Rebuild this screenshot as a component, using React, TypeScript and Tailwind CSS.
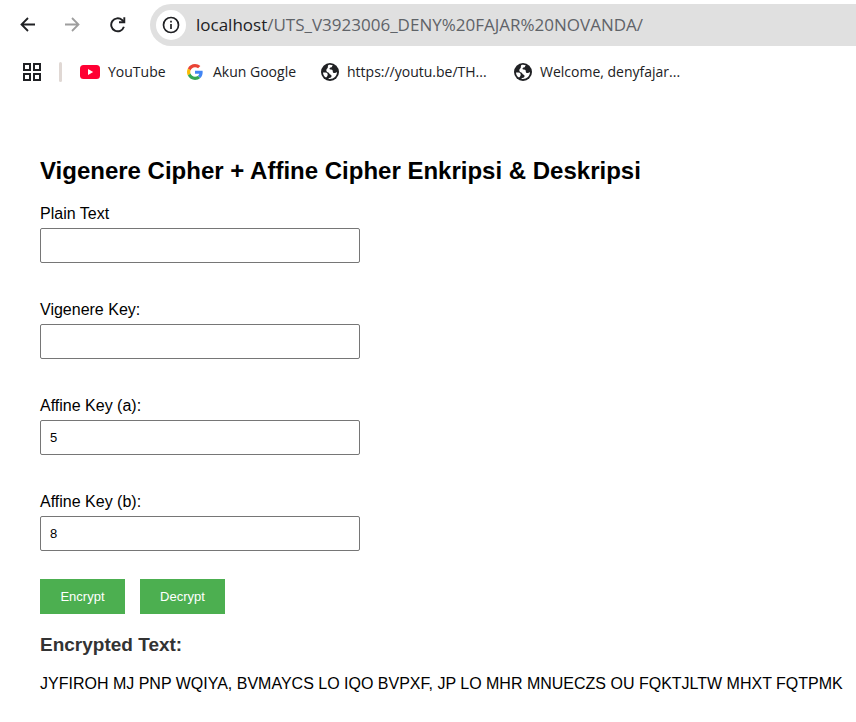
import { useState, type ReactNode } from "react";

function BackIcon() {
  return (
    <svg viewBox="0 0 16 16" className="size-4" fill="none" stroke="currentColor" strokeWidth="1.800">
      <path d="M15 7.500H1.500M8 1L1.500 7.500 8 14" />
    </svg>
  );
}

function ForwardIcon() {
  return (
    <svg viewBox="0 0 16 16" className="size-4" fill="none" stroke="currentColor" strokeWidth="1.800">
      <path d="M1 7.500H14.500M8 1L14.500 7.500 8 14" />
    </svg>
  );
}

function ReloadIcon() {
  return (
    <svg viewBox="0 0 16 16" className="size-4" fill="none" stroke="currentColor" strokeWidth="1.900">
      <path d="M13.900 9.800A6.500 6.500 0 1 1 12.100 3L14.200 5" />
      <path d="M14.300 .3V5.300H9" />
    </svg>
  );
}

function InfoIcon() {
  return (
    <svg viewBox="0 0 18 18" className="size-[18px]" fill="none" stroke="currentColor" strokeWidth="1.700">
      <circle cx="9" cy="9" r="7.500" />
      <path d="M9 8v5M9 4.800v1.800" />
    </svg>
  );
}

function AppsIcon() {
  return (
    <svg viewBox="0 0 18 18" className="size-[18px]" fill="none" stroke="currentColor" strokeWidth="2">
      <path d="M1 1h6v6H1zM11 1h6v6h-6zM1 11h6v6H1zM11 11h6v6h-6z" />
    </svg>
  );
}

function YouTubeIcon() {
  return (
    <svg viewBox="0 0 20 14" className="h-3.5 w-5">
      <rect width="20" height="14" rx="3.500" fill="#ff0033" />
      <path d="M8 4l5.200 3L8 10z" fill="#fff" />
    </svg>
  );
}

function GoogleIcon() {
  return (
    <svg viewBox="0 0 48 48" className="size-4">
      <path fill="#EA4335" d="M24 9.500c3.540 0 6.710 1.220 9.210 3.600l6.850-6.850C35.900 2.380 30.470 0 24 0 14.620 0 6.510 5.380 2.560 13.220l7.980 6.190C12.430 13.720 17.740 9.500 24 9.500z" />
      <path fill="#4285F4" d="M46.980 24.550c0-1.570-.15-3.090-.38-4.550H24v9.020h12.940c-.58 2.960-2.260 5.480-4.780 7.180l7.730 6c4.510-4.180 7.090-10.360 7.090-17.650z" />
      <path fill="#FBBC05" d="M10.530 28.590c-.48-1.450-.76-2.990-.76-4.590s.27-3.140.76-4.590l-7.980-6.190C.92 16.460 0 20.120 0 24c0 3.880.92 7.540 2.560 10.780l7.970-6.190z" />
      <path fill="#34A853" d="M24 48c6.480 0 11.930-2.130 15.890-5.810l-7.730-6c-2.150 1.450-4.920 2.300-8.160 2.300-6.260 0-11.570-4.220-13.470-9.910l-7.980 6.190C6.510 42.620 14.620 48 24 48z" />
    </svg>
  );
}

function GlobeIcon() {
  return (
    <svg viewBox="0 0 18 18" className="size-[18px]">
      <circle cx="9" cy="9" r="9" fill="#202124" />
      <path
        fill="#fff"
        d="M7.500 2C9 1.700 10.600 1.900 12 2.600 11.200 2.900 10.900 3.500 10.900 4.200 10 4.300 8.900 4.600 8.500 5.500 8.300 6.300 9 6.600 10 6.600c1.400 0 1.800.8 1.800 1.900 0 1.200.7 1.500 1.700 1.500 1 0 1.800-.3 2.500-1C16 12.900 12.900 16 9 16 8 16 7.500 15.700 7.200 15.200c1.400-.2 2.700-.4 3.200-1.500.4-1-.2-1.800-1.300-2.200C8.200 11.200 8.500 10 7.300 9.600 6.200 9.200 5.300 8.600 5.300 7.300 5.300 6 6.500 5.500 6.800 4.500 7 3.700 6.600 2.800 7.500 2z"
      />
      <path fill="#fff" d="M2 9.500h2.500c1.800 0 2.200 1 2.200 2.300 0 1.300-.8 2-1.700 2.800C3.200 13.500 2 11.700 2 9.500z" />
    </svg>
  );
}

function Bookmark({ icon, label, className }: { icon: ReactNode; label: string; className: string }) {
  return (
    <a href="#" className={`flex shrink-0 items-center whitespace-nowrap ${className}`}>
      {icon}
      <span>{label}</span>
    </a>
  );
}

function BrowserBar() {
  return (
    <header className="bg-white font-['Open_Sans','Noto_Sans',sans-serif] text-[#202124]">
      <div className="flex items-center pt-1 pl-5">
        <button type="button" aria-label="Back" className="mr-7 flex">
          <BackIcon />
        </button>
        <button type="button" aria-label="Forward" disabled className="mr-[30px] flex text-[#9e9e9e]">
          <ForwardIcon />
        </button>
        <button type="button" aria-label="Reload" className="mr-6 flex">
          <ReloadIcon />
        </button>
        <div className="flex h-[42px] min-w-0 flex-1 items-center gap-2.5 overflow-hidden rounded-l-full bg-[#e0e0e0] pl-1.5">
          <button type="button" aria-label="Site information" className="flex size-[30px] shrink-0 items-center justify-center rounded-full bg-white">
            <InfoIcon />
          </button>
          <div className="text-[17px] whitespace-nowrap">
            localhost<span className="text-[#5f6368]">/UTS_V3923006_DENY%20FAJAR%20NOVANDA/</span>
          </div>
        </div>
      </div>
      <nav aria-label="Bookmarks" className="flex h-[52px] items-center overflow-hidden pl-[23px] text-sm">
        <button type="button" aria-label="Apps" className="flex shrink-0">
          <AppsIcon />
        </button>
        <span className="mx-[18px] h-5 w-[3px] shrink-0 rounded-full bg-[#e0d8d4]" />
        <Bookmark icon={<YouTubeIcon />} label="YouTube" className="w-[107px] gap-2" />
        <Bookmark icon={<GoogleIcon />} label="Akun Google" className="w-[134px] gap-2.5" />
        <Bookmark icon={<GlobeIcon />} label="https://youtu.be/TH..." className="w-[193px] gap-2" />
        <Bookmark icon={<GlobeIcon />} label="Welcome, denyfajar..." className="gap-2" />
      </nav>
    </header>
  );
}

function Field({ id, label, initial = "" }: { id: string; label: string; initial?: string }) {
  const [value, setValue] = useState(initial);
  return (
    <div>
      <label htmlFor={id} className="mb-[5px] block text-base leading-[18px]">
        {label}
      </label>
      <input
        id={id}
        type="text"
        value={value}
        onChange={(event) => setValue(event.target.value)}
        className="block h-[35px] w-80 max-w-full rounded-xs border border-[#767676] bg-white px-[9px] text-[13px]"
      />
    </div>
  );
}

const actionClass = "h-[35px] min-w-[85px] bg-[#4caf50] px-5 text-[13px] text-white";

export default function App() {
  return (
    <div className="min-h-screen bg-white">
      <BrowserBar />
      <main className="px-10 pt-[59px] font-['Liberation_Sans',Arial,sans-serif] text-black">
        <h1 className="mb-5 text-2xl leading-7 font-bold">Vigenere Cipher + Affine Cipher Enkripsi &amp; Deskripsi</h1>
        <form onSubmit={(event) => event.preventDefault()}>
          <div className="flex flex-col gap-[38px]">
            <Field id="plain-text" label="Plain Text" />
            <Field id="vigenere-key" label="Vigenere Key:" />
            <Field id="affine-a" label="Affine Key (a):" initial="5" />
            <Field id="affine-b" label="Affine Key (b):" initial="8" />
          </div>
          <div className="mt-7 flex gap-[15px]">
            <button type="submit" className={actionClass}>
              Encrypt
            </button>
            <button type="submit" className={actionClass}>
              Decrypt
            </button>
          </div>
        </form>
        <section>
          <h2 className="mt-5 text-[19px] leading-[22px] font-bold text-[#333]">Encrypted Text:</h2>
          <output className="mt-[19px] block text-base leading-[18px] whitespace-nowrap">
            JYFIROH MJ PNP WQIYA, BVMAYCS LO IQO BVPXF, JP LO MHR MNUECZS OU FQKTJLTW MHXT FQTPMK
          </output>
        </section>
      </main>
    </div>
  );
}
